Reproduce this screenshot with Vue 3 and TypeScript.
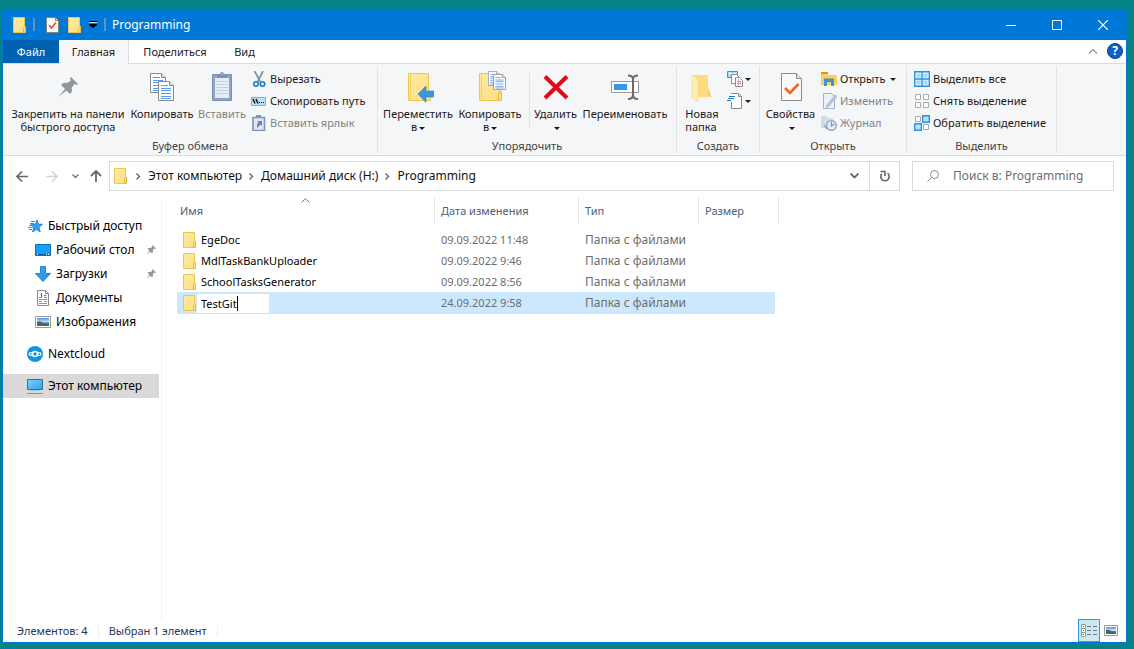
<script setup lang="ts">
import { ref } from 'vue'

interface FileRow {
  name: string
  date: string
  kind: string
}

const files: FileRow[] = [
  { name: 'EgeDoc', date: '09.09.2022 11:48', kind: 'Папка с файлами' },
  { name: 'MdlTaskBankUploader', date: '09.09.2022 9:46', kind: 'Папка с файлами' },
  { name: 'SchoolTasksGenerator', date: '09.09.2022 8:56', kind: 'Папка с файлами' },
  { name: 'TestGit', date: '24.09.2022 9:58', kind: 'Папка с файлами' },
]

const renaming = ref('TestGit')
const query = ref('')
const crumbs = ['Этот компьютер', 'Домашний диск (H:)', 'Programming']

const places = [
  { label: 'Быстрый доступ', icon: 'i-star', child: false, pinned: false, gap: false, active: false },
  { label: 'Рабочий стол', icon: 'i-desktop', child: true, pinned: true, gap: false, active: false },
  { label: 'Загрузки', icon: 'i-download', child: true, pinned: true, gap: false, active: false },
  { label: 'Документы', icon: 'i-docs', child: true, pinned: false, gap: false, active: false },
  { label: 'Изображения', icon: 'i-pictures', child: true, pinned: false, gap: false, active: false },
  { label: 'Nextcloud', icon: 'i-nextcloud', child: false, pinned: false, gap: true, active: false },
  { label: 'Этот компьютер', icon: 'i-pc', child: false, pinned: false, gap: true, active: true },
]
</script>

<template>
  <div class="desktop">
    <svg class="defs" aria-hidden="true">
      <defs>
        <linearGradient id="g-folder" x1="0" y1="0" x2="1" y2="1">
          <stop offset="0" stop-color="#ffe9a2" />
          <stop offset="1" stop-color="#fddf83" />
        </linearGradient>
        <linearGradient id="g-blue" x1="0" y1="0" x2="1" y2="1">
          <stop offset="0" stop-color="#3fa9f5" />
          <stop offset="1" stop-color="#1a8de0" />
        </linearGradient>
        <linearGradient id="g-sky" x1="0" y1="0" x2="0" y2="1">
          <stop offset="0" stop-color="#4a8ff0" />
          <stop offset=".5" stop-color="#cfe4f7" />
          <stop offset=".6" stop-color="#4d7f86" />
          <stop offset="1" stop-color="#2d5f8a" />
        </linearGradient>
        <linearGradient id="g-screen" x1="0" y1="0" x2="1" y2="1">
          <stop offset="0" stop-color="#7cd0fb" />
          <stop offset="1" stop-color="#2ba4f3" />
        </linearGradient>
      </defs>
      <symbol id="i-folder" viewBox="0 0 13 16">
        <path d="M.5.5h11v9h1v6H.5z" fill="url(#g-folder)" stroke="#ecc84f" />
        <path d="M10.5 15.5v-5l1-1h1v6z" fill="#ffe08a" stroke="#e6bd3c" />
      </symbol>
      <symbol id="i-pin" viewBox="0 0 20 20">
        <path d="M0 20 7 12 3 8Q5 5 9 6L13 3.500 12 1 13 0 20 7 19 8 16.500 7 13.500 11Q15 14 12 17L8.500 13.500Z" fill="#8d989e" />
      </symbol>
      <symbol id="i-sheet" viewBox="0 0 16 20">
        <path d="M.5.5h11l4 4v15H.5z" fill="#fbfcfd" stroke="#8b8b8b" />
        <path d="M11.500.5v4h4" fill="#e6e6e6" stroke="#8b8b8b" />
        <path d="M3 4.500h7M3 7.500h10M3 9.500h10M3 12.500h10M3 15.500h10M3 17.500h10" stroke="#5a9bf0" />
      </symbol>
      <symbol id="i-star" viewBox="0 0 16 16">
        <path d="m10 2 1.300 4 4.200.3-3.500 3 1.300 4.700-3.800-2.500L5.500 14l1.300-4.700-2.800-3 4.500-.3z" fill="#2aa0f0" stroke="#1382cf" stroke-width=".8" />
        <path d="M4 3.500h4M3 5.500h4M2 7.500h4M1 9.500h5M2 11.500h3" stroke="#2a90d8" />
      </symbol>
      <symbol id="i-desktop" viewBox="0 0 16 16">
        <path d="M.5 2.500h15v11H.5z" fill="#15a0fb" stroke="#0b74b8" />
        <path d="M1 12.500h14" stroke="#0a5a94" />
        <path d="M2 12.500h1M11 12.500h1M13 12.500h1" stroke="#fff" />
      </symbol>
      <symbol id="i-download" viewBox="0 0 16 16">
        <path d="M5.500.5h5v7h5L8 15.500.5 7.500h5z" fill="url(#g-blue)" stroke="#2f80c4" />
      </symbol>
      <symbol id="i-docs" viewBox="0 0 16 16">
        <path d="M2.500.5h8l3 3v12h-11z" fill="#fff" stroke="#8b8b8b" />
        <path d="M10.500.5v3h3" fill="none" stroke="#8b8b8b" />
        <path d="M4 7.500h3M9 7.500h3M4 9.500h8M9 11.500h3M4 13.500h8M4 11.500h3" stroke="#8b9aa8" />
        <path d="M6.500 3v4M5.500 5h2M9 5.500h2" stroke="#2284cf" />
      </symbol>
      <symbol id="i-pictures" viewBox="0 0 16 16">
        <path d="M.5 2.500h15v11H.5z" fill="#fff" stroke="#999" />
        <path d="M2 4h12v8H2z" fill="url(#g-sky)" />
        <path d="M2 8q4-2 7 2l5 0v2H2z" fill="#3e6d60" />
      </symbol>
      <symbol id="i-nextcloud" viewBox="0 0 16 16">
        <circle cx="8" cy="8" r="8" fill="#1095db" />
        <g fill="none" stroke="#fff">
          <circle cx="8" cy="8" r="2.500" stroke-width="1.500" />
          <circle cx="3.700" cy="8" r="1.500" stroke-width="1.200" />
          <circle cx="12.300" cy="8" r="1.500" stroke-width="1.200" />
        </g>
      </symbol>
      <symbol id="i-pc" viewBox="0 0 16 16">
        <path d="M.5 1.500h15v10H.5z" fill="url(#g-screen)" stroke="#356f96" />
        <path d="M4 12.500h8" stroke="#9fc4dc" />
        <path d="M0 15.500h16" stroke="#6f97b0" />
      </symbol>
    </svg>

    <div class="window">
      <header class="titlebar">
        <svg class="folder" aria-hidden="true"><use href="#i-folder" /></svg>
        <i class="tsep"></i>
        <button class="plain q1" aria-label="Свойства">
          <svg width="13" height="16" viewBox="0 0 13 16">
            <path d="M.5.5h9l3 3v12H.5z" fill="#f8f8f8" stroke="#8a7f78" />
            <path d="M9.500.5v3h3" fill="none" stroke="#8a7f78" />
            <path d="m3 8 2.500 3L10 5.500" fill="none" stroke="#e8501c" stroke-width="1.600" />
          </svg>
        </button>
        <button class="plain q2" aria-label="Новая папка"><svg class="folder"><use href="#i-folder" /></svg></button>
        <button class="plain q3" aria-label="Настройка панели">
          <svg width="8" height="7" viewBox="0 0 8 7">
            <path d="M0 .5h8" stroke="#000" /><path d="M0 1.500h8" stroke="#cde" /><path d="M0 3h8v1L4 7 0 4z" fill="#000" />
          </svg>
        </button>
        <i class="tsep"></i>
        <h1 class="title">Programming</h1>
        <div class="winbtns">
          <button class="plain" aria-label="Свернуть">
            <svg width="10" height="10"><path d="M0 5.500h10" stroke="#fff" /></svg>
          </button>
          <button class="plain" aria-label="Развернуть">
            <svg width="10" height="10"><path d="M.5.5h9v9h-9z" fill="none" stroke="#fff" /></svg>
          </button>
          <button class="plain" aria-label="Закрыть">
            <svg width="10" height="10"><path d="m0 0 10 10M10 0 0 10" stroke="#fff" stroke-width="1.200" /></svg>
          </button>
        </div>
      </header>

      <nav class="tabs">
        <button class="plain tab file">Файл</button>
        <button class="plain tab home">Главная</button>
        <button class="plain tab share">Поделиться</button>
        <button class="plain tab view">Вид</button>
        <div class="tabtools">
          <button class="plain" aria-label="Свернуть ленту">
            <svg width="8" height="5"><path d="m0 4.500 4-4 4 4" fill="none" stroke="#999" stroke-width="1.300" /></svg>
          </button>
          <button class="plain help" aria-label="Справка">?</button>
        </div>
      </nav>

      <div class="ribbon">
        <section class="group g1">
          <div class="tools">
            <button class="plain big w-pin">
              <svg viewBox="0 0 32 32"><use href="#i-pin" x="6" y="6" width="20" height="20" /></svg>
              <span>Закрепить на панели<br />быстрого доступа</span>
            </button>
            <button class="plain big w-copy">
              <svg viewBox="0 0 32 32">
                <use href="#i-sheet" x="4" y="2" width="16" height="20" />
                <use href="#i-sheet" x="12" y="10" width="16" height="20" />
              </svg>
              <span>Копировать</span>
            </button>
            <button class="plain big w-paste off" disabled>
              <svg viewBox="0 0 32 32">
                <path d="M6.500 3.500h19v26h-19z" fill="#91a4c6" stroke="#7d90b3" />
                <path d="M9 7h14v20H9z" fill="#e7edf7" />
                <path d="M10 10.500h12M10 13.500h12M10 16.500h12M10 19.500h12M10 22.500h12" stroke="#c3cfe4" />
                <path d="M11 7V4h3q0-3 2-3t2 3h3v3z" fill="#8193b5" />
                <path d="M15.500 3h1" stroke="#fff" />
              </svg>
              <span>Вставить</span>
            </button>
            <div class="stack">
              <button class="plain small">
                <svg viewBox="0 0 16 16">
                  <path d="M3.500 0 9.500 11M12 0 6.500 11" stroke="#8795a1" stroke-width="1.800" />
                  <circle cx="5" cy="13" r="2.200" fill="none" stroke="#0d7fc4" stroke-width="1.600" />
                  <circle cx="11.500" cy="13" r="2.200" fill="none" stroke="#0d7fc4" stroke-width="1.600" />
                </svg>
                <span>Вырезать</span>
              </button>
              <button class="plain small">
                <svg viewBox="0 0 16 16">
                  <path d="M.5 4.500h14v8H.5z" fill="#b9e0f8" stroke="#7fb4d6" />
                  <path d="m2 6 2 4.500M5 6l2 4.500" stroke="#111" stroke-width="1.500" />
                  <path d="M8 9.500h1M10 9.500h1M12 9.500h1" stroke="#111" />
                </svg>
                <span>Скопировать путь</span>
              </button>
              <button class="plain small off" disabled>
                <svg viewBox="0 0 16 16">
                  <path d="M2 2.500h11.500v13H2z" fill="#dfe7f3" stroke="#7f93b6" stroke-width="1.600" />
                  <path d="M5 0h5v3H5z" fill="#7f93b6" />
                  <path d="M6 6h5v5L9.500 9.500 6 13V9l1.500-1.500z" fill="#6c84ad" />
                </svg>
                <span>Вставить ярлык</span>
              </button>
            </div>
          </div>
          <h2>Буфер обмена</h2>
        </section>

        <section class="group g2">
          <div class="tools">
            <button class="plain big w-move">
              <svg viewBox="0 0 32 32">
                <path d="M6.500 2.500h20v18h2v9h-22z" fill="url(#g-folder)" stroke="#ecc84f" />
                <path d="M8.500 3v26" stroke="#f2d36b" />
                <path d="m16 23 8-8v5h8v6h-8v5.500z" fill="#3a97e0" stroke="#2b80c4" stroke-width=".6" />
              </svg>
              <span>Переместить<br />в<i class="arr"></i></span>
            </button>
            <button class="plain big w-copy2">
              <svg viewBox="0 0 32 32">
                <path d="M5.500 2.500h20v18h2v9h-22z" fill="url(#g-folder)" stroke="#ecc84f" />
                <path d="M7.500 3v26" stroke="#f2d36b" />
                <path d="M24.500 29v-6l1.500-2h1.500v8z" fill="#ffe08a" stroke="#e6bd3c" />
                <use href="#i-sheet" x="14" y="0" width="12" height="15" />
                <use href="#i-sheet" x="19" y="3" width="13" height="16" />
              </svg>
              <span>Копировать<br />в<i class="arr"></i></span>
            </button>
            <i class="isep"></i>
            <button class="plain big w-del">
              <svg viewBox="0 0 32 32">
                <path d="M5 5.500 27 27M27 5.500 5 27" stroke="#e20a17" stroke-width="4" />
              </svg>
              <span>Удалить<br /><i class="arr"></i></span>
            </button>
            <button class="plain big w-ren">
              <svg viewBox="0 0 32 32">
                <path d="M2.500 10.500h27v11h-27z" fill="#fff" stroke="#999" />
                <path d="M5 13h13v6H5z" fill="#3398ea" />
                <path d="M19 4.500q5 0 5 3.500v16q0 4-5 4M29 4.500q-5 0-5 3.500v16q0 4 5 4" fill="none" stroke="#6b6b6b" stroke-width="2" />
              </svg>
              <span>Переименовать</span>
            </button>
          </div>
          <h2>Упорядочить</h2>
        </section>

        <section class="group g3">
          <div class="tools">
            <button class="plain big w-new">
              <svg viewBox="0 0 32 32">
                <path d="M8 4h14v13l3 9H8z" fill="#fbdc80" />
                <path d="m6 4 6 4v23l-6-4z" fill="#fdeeb9" stroke="#f5d97c" stroke-width=".6" />
                <path d="M22 17v6l3 3z" fill="#eec55a" />
              </svg>
              <span>Новая<br />папка</span>
            </button>
            <div class="stack">
              <button class="plain small" aria-label="Создать элемент">
                <svg viewBox="0 0 16 16">
                  <path d="M.5.5h10v6H.5z" fill="#a8dcf5" stroke="#4b90b5" /><path d="M2 2.500h3M7 2.500h2" stroke="#fff" />
                  <path d="M4.500 3.500h5l3 3v6h-8z" fill="#fff" stroke="#8b8b8b" />
                  <path d="M8.500 6.500h4l3 3v6h-7z" fill="#fff" stroke="#8b8b8b" />
                  <path d="M10 10.500h4M10 12.500h4" stroke="#5a9bf0" /><path d="M11.500 8v7" stroke="#f19a9a" />
                </svg><i class="arr"></i>
              </button>
              <button class="plain small" aria-label="Простой доступ">
                <svg viewBox="0 0 16 16">
                  <path d="M4 .5h7.500l3 3v12h-10V9" fill="#fdfdfd" stroke="#8b8b8b" /><path d="M11.500.5v3h3" fill="none" stroke="#8b8b8b" />
                  <path d="M2 3.500h6M1 5.500h6M0 7.500h4" stroke="#2471b8" />
                </svg><i class="arr"></i>
              </button>
            </div>
          </div>
          <h2>Создать</h2>
        </section>

        <section class="group g4">
          <div class="tools">
            <button class="plain big w-prop">
              <svg viewBox="0 0 32 32">
                <path d="M6.500 2.500h15l5 5v22h-20z" fill="#f7f9fb" stroke="#8b8b8b" />
                <path d="M21.500 2.500v5h5" fill="#e4e4e4" stroke="#8b8b8b" />
                <path d="m10 17 5 5 8.500-9" fill="none" stroke="#f2661f" stroke-width="2.600" />
              </svg>
              <span>Свойства<br /><i class="arr"></i></span>
            </button>
            <div class="stack">
              <button class="plain small">
                <svg viewBox="0 0 16 16">
                  <path d="M0 1h7v3h9v10H0z" fill="#fdcf55" /><path d="M0 1h7v2H0z" fill="#d99a12" />
                  <path d="M3 15V7.500h10V15h-3v-4H6v4z" fill="#3b93da" />
                </svg>
                <span>Открыть</span><i class="arr"></i>
              </button>
              <button class="plain small off" disabled>
                <svg viewBox="0 0 16 16">
                  <path d="M2.500.5h8l3 3v12h-11z" fill="#edf2fa" stroke="#a3b3cf" />
                  <path d="m6 12 8-10 2 1.500L8 13l-3 1.500z" fill="#b6c5de" stroke="#98abc9" stroke-width=".6" />
                </svg>
                <span>Изменить</span>
              </button>
              <button class="plain small off" disabled>
                <svg viewBox="0 0 16 16">
                  <path d="M0 1h6v2h6v10H0z" fill="#d2dbea" />
                  <circle cx="10.500" cy="10.500" r="4.800" fill="#e6edf7" stroke="#93a7c8" stroke-width="1.400" />
                  <path d="M10.500 7v4l3-2M6 14l-3-4" fill="none" stroke="#7d94ba" stroke-width="1.200" />
                </svg>
                <span>Журнал</span>
              </button>
            </div>
          </div>
          <h2>Открыть</h2>
        </section>

        <section class="group g5">
          <div class="tools">
            <div class="stack">
              <button class="plain small">
                <svg viewBox="0 0 16 16">
                  <path d="M.7.7h14.600v14.600H.7z" fill="#e8f5fe" />
                  <path d="M2.500 2.500h4v4h-4zM9.500 2.500h4v4h-4zM2.500 9.500h4v4h-4zM9.500 9.500h4v4h-4z" fill="#a6dafa" />
                  <path d="M.7.7h14.600v14.600H.7zM8 0v16M0 8h16" fill="none" stroke="#2e94e0" stroke-width="1.400" />
                </svg>
                <span>Выделить все</span>
              </button>
              <button class="plain small">
                <svg viewBox="0 0 16 16">
                  <path d="M1.500 1.500h5v5h-5zM9.500 1.500h5v5h-5zM1.500 9.500h5v5h-5zM9.500 9.500h5v5h-5z" fill="#fff" stroke="#aaa" />
                </svg>
                <span>Снять выделение</span>
              </button>
              <button class="plain small">
                <svg viewBox="0 0 16 16">
                  <path d="M1.500 1.500h5v5h-5zM9.500 9.500h5v5h-5z" fill="#fff" stroke="#aaa" />
                  <path d="M8.700.7h6.600v6.600H8.700zM.7 8.700h6.600v6.600H.7z" fill="#b3e0fb" stroke="#2e94e0" stroke-width="1.400" />
                </svg>
                <span>Обратить выделение</span>
              </button>
            </div>
          </div>
          <h2>Выделить</h2>
        </section>
      </div>

      <div class="navrow">
        <button class="plain n-back" aria-label="Назад">
          <svg width="12" height="11"><path d="M12 5.500H1M6 .5l-5 5 5 5" fill="none" stroke="#666" stroke-width="1.600" /></svg>
        </button>
        <button class="plain n-fwd" aria-label="Вперёд">
          <svg width="12" height="11"><path d="M0 5.500h11M6 .5l5 5-5 5" fill="none" stroke="#d4d4d4" stroke-width="1.600" /></svg>
        </button>
        <button class="plain n-recent" aria-label="Последние расположения">
          <svg width="7" height="5"><path d="m.5.5 3 3 3-3" fill="none" stroke="#777" stroke-width="1.500" /></svg>
        </button>
        <button class="plain n-up" aria-label="Вверх">
          <svg width="12" height="12"><path d="M6 12V1M1 6l5-5 5 5" fill="none" stroke="#666" stroke-width="1.800" /></svg>
        </button>
        <div class="address">
          <svg class="folder" aria-hidden="true"><use href="#i-folder" /></svg>
          <template v-for="c in crumbs" :key="c">
            <svg class="chev" width="5" height="7"><path d="m.5.5 3 3-3 3" fill="none" stroke="#666" stroke-width="1.400" /></svg>
            <button class="plain crumb">{{ c }}</button>
          </template>
          <button class="plain drop" aria-label="Предыдущие расположения">
            <svg width="9" height="6"><path d="m.5.5 4 4 4-4" fill="none" stroke="#666" stroke-width="1.800" /></svg>
          </button>
          <button class="plain refresh" aria-label="Обновить">
            <svg width="12" height="12"><path d="M2.800 3.800A4.200 4.200 0 1 0 8.500 3.200M1.500 1.500H6V6" fill="none" stroke="#666" stroke-width="1.600" /></svg>
          </button>
        </div>
        <label class="search">
          <svg width="12" height="12"><circle cx="7.500" cy="4.500" r="4" fill="none" stroke="#888" /><path d="M4.700 7.300.5 11.500" stroke="#888" /></svg>
          <input v-model="query" type="text" placeholder="Поиск в: Programming" aria-label="Поиск в: Programming" />
        </label>
      </div>

      <main class="content">
        <aside class="side">
          <button
            v-for="p in places"
            :key="p.label"
            class="plain place"
            :class="{ child: p.child, gap: p.gap, active: p.active }"
          >
            <svg class="picon"><use :href="'#' + p.icon" /></svg>
            <span>{{ p.label }}</span>
            <svg v-if="p.pinned" class="pin"><use href="#i-pin" /></svg>
          </button>
        </aside>
        <div class="list">
          <table>
            <colgroup><col class="c1" /><col class="c2" /><col class="c3" /><col class="c4" /></colgroup>
            <thead>
              <tr>
                <th>
                  <button class="plain head first">Имя
                    <svg class="sort" width="9" height="5"><path d="m.5 4.500 4-4 4 4" fill="none" stroke="#777" /></svg>
                  </button>
                </th>
                <th><button class="plain head">Дата изменения</button></th>
                <th><button class="plain head">Тип</button></th>
                <th><button class="plain head">Размер</button></th>
              </tr>
            </thead>
            <tbody>
              <tr v-for="(f, i) in files" :key="f.name" :class="{ selected: i === 3 }">
                <td class="name">
                  <div>
                    <svg class="folder"><use href="#i-folder" /></svg>
                    <span v-if="i !== 3">{{ f.name }}</span>
                    <span v-else class="edit"><input v-model="renaming" type="text" aria-label="Имя папки" /><i class="caret"></i></span>
                  </div>
                </td>
                <td>{{ f.date }}</td>
                <td class="kind">{{ f.kind }}</td>
                <td></td>
              </tr>
            </tbody>
          </table>
        </div>
      </main>

      <footer class="status">
        <span>Элементов: 4</span>
        <span>Выбран 1 элемент</span>
        <div class="views">
          <button class="plain on" aria-label="Таблица">
            <svg width="16" height="14" viewBox="0 0 16 14">
              <path d="M.5.5h4v4h-4zM.5 4.500h4v4h-4zM.5 8.500h4v4h-4z" fill="#fff" stroke="#999" />
              <path d="M2 2.500h1" stroke="#2b9a3c" /><path d="M2 6.500h1" stroke="#2b6ff0" /><path d="M2 10.500h1" stroke="#e02020" />
              <path d="M6 2.500h4M12 2.500h4M6 6.500h4M12 6.500h4M6 10.500h4M12 10.500h4" stroke="#777" />
            </svg>
          </button>
          <button class="plain" aria-label="Крупные эскизы">
            <svg width="14" height="12" viewBox="0 0 14 12">
              <path d="M.5.5h13v10H.5z" fill="#fff" stroke="#999" />
              <path d="M2 2h10v7H2z" fill="url(#g-sky)" /><path d="M2 5q4-1 6 2h4v2H2z" fill="#3e6d60" />
            </svg>
          </button>
        </div>
      </footer>
    </div>
  </div>
</template>

<style>
html,
body {
  margin: 0;
  background: #038387;
}
</style>

<style scoped>
.desktop {
  box-sizing: border-box;
  min-height: 100vh;
  padding: 9px 7px 6px 2px;
  display: flex;
  background: #038387;
  font-family: "Noto Sans", "Open Sans", sans-serif;
  font-size: 12px;
  line-height: 16px;
  color: #1b1b1b;
}
.desktop * {
  box-sizing: border-box;
}
.defs {
  position: absolute;
  width: 0;
  height: 0;
}
svg {
  display: block;
  flex: none;
}
.plain {
  font: inherit;
  color: inherit;
  background: none;
  border: 0;
  padding: 0;
  margin: 0;
  white-space: nowrap;
}
.window {
  flex: 1;
  min-width: 0;
  display: flex;
  flex-direction: column;
  background: #fff;
  border: 1px solid #0078d7;
  border-top: 0;
}
.folder {
  width: 13px;
  height: 16px;
}

.titlebar {
  display: flex;
  align-items: center;
  height: 31px;
  padding-left: 10px;
  background: #0078d7;
  color: #fff;
}
.tsep {
  width: 2px;
  height: 13px;
  margin: 0 6px 0 7px;
  background: #5795cb;
}
.q1 {
  margin-left: 5px;
}
.q2 {
  margin: 0 8px 0 9px;
}
.title {
  margin: 0;
  font-size: 12px;
  font-weight: 400;
}
.winbtns {
  display: flex;
  margin-left: auto;
}
.winbtns button {
  width: 46px;
  height: 31px;
  display: grid;
  place-items: center;
}

.tabs {
  display: flex;
  height: 24px;
  font-size: 11px;
  box-shadow: inset 0 -1px #dadbdc;
}
.tab {
  height: 23px;
}
.file {
  width: 56px;
  background: #0063b1;
  color: #fff;
}
.home {
  width: 70px;
  height: 24px;
  background: #f5f6f7;
  border-right: 1px solid #dadbdc;
}
.share {
  width: 92px;
}
.view {
  width: 47px;
}
.tabtools {
  display: flex;
  align-items: center;
  gap: 10px;
  height: 22px;
  margin-left: auto;
  padding-right: 3px;
}
.help {
  width: 16px;
  height: 16px;
  border-radius: 50%;
  border: 1px solid #0a3f78;
  background: #0b62c4;
  color: #fff;
  font-size: 12px;
  font-weight: 700;
  line-height: 14px;
}

.ribbon {
  display: flex;
  height: 92px;
  padding-top: 2px;
  font-size: 11px;
  background: #f5f6f7;
  border-bottom: 1px solid #dadbdc;
}
.group {
  flex: none;
  height: 87px;
  display: flex;
  flex-direction: column;
  justify-content: space-between;
  border-right: 1px solid #e2e3e4;
}
.group h2 {
  margin: 0;
  font-size: 11px;
  font-weight: 400;
  line-height: 14px;
  text-align: center;
  color: #444;
}
.g1 { width: 375px; }
.g2 { width: 299px; }
.g3 { width: 83px; }
.g4 { width: 147px; }
.g5 { width: 150px; }
.tools {
  display: flex;
}
.big {
  display: flex;
  flex-direction: column;
  align-items: center;
  padding-top: 5px;
  line-height: 13px;
}
.big svg {
  width: 32px;
  height: 32px;
}
.big span {
  margin-top: 4px;
}
.w-pin { width: 120px; margin-left: 5px; }
.w-copy { width: 68px; }
.w-paste { width: 52px; }
.w-move { width: 70px; margin-left: 5px; }
.w-copy2 { width: 74px; }
.w-del { width: 51px; }
.w-ren { width: 88px; }
.w-new { width: 50px; text-align: left; }
.w-prop { width: 61px; }
.isep {
  width: 1px;
  height: 55px;
  margin-top: 7px;
  margin-left: 2px;
  background: #e2e3e4;
}
.stack {
  display: flex;
  flex-direction: column;
  padding-top: 2px;
}
.g1 .stack {
  padding-left: 3px;
}
.g5 .stack {
  padding-left: 7px;
}
.small {
  display: flex;
  align-items: center;
  gap: 3px;
  height: 22px;
}
.g3 .small {
  gap: 0;
}
.small svg {
  width: 16px;
  height: 16px;
}
.off {
  color: #838383;
}
.arr {
  display: inline-block;
  width: 0;
  height: 0;
  border: 3px solid transparent;
  border-top-color: #1b1b1b;
  border-bottom: 0;
  vertical-align: middle;
  margin-left: 2px;
}

.navrow {
  display: flex;
  align-items: flex-start;
  height: 42px;
  padding: 5px 12px 0 13px;
}
.navrow > .plain {
  height: 30px;
  display: grid;
  place-items: center;
}
.navrow > .n-back { width: 12px; }
.navrow > .n-fwd { width: 12px; margin-left: 18px; }
.navrow > .n-recent { width: 8px; margin-left: 13px; }
.navrow > .n-up { width: 12px; margin-left: 11px; }
.address {
  flex: 1;
  min-width: 0;
  height: 30px;
  margin-left: 7px;
  padding-left: 4px;
  display: flex;
  align-items: center;
  border: 1px solid #d9d9d9;
}
.address .folder {
  margin-right: 2px;
}
.chev {
  margin: 0 7px;
}
.crumb {
  color: #111;
}
.drop {
  width: 30px;
  height: 28px;
  margin-left: auto;
  display: grid;
  place-items: center;
}
.refresh {
  width: 30px;
  height: 28px;
  display: grid;
  place-items: center;
  border-left: 1px solid #d9d9d9;
}
.search {
  width: 202px;
  height: 30px;
  margin-left: 12px;
  padding-left: 14px;
  display: flex;
  align-items: center;
  gap: 14px;
  border: 1px solid #d9d9d9;
}
.search input {
  flex: 1;
  min-width: 0;
  padding: 0;
  border: 0;
  outline: 0;
  background: none;
  font: inherit;
}
.search input::placeholder {
  color: #6d6d6d;
  opacity: 1;
}

.content {
  flex: 1;
  display: flex;
}
.side {
  width: 159px;
  padding: 16px 2px 0 0;
  display: flex;
  flex-direction: column;
  border-right: 1px solid #f0f0f0;
}
.place {
  height: 24px;
  padding-left: 24px;
  display: flex;
  align-items: center;
  gap: 5px;
  color: #000;
}
.child {
  padding-left: 32px;
}
.gap {
  margin-top: 8px;
}
.active {
  background: #d9d9d9;
}
.picon {
  width: 16px;
  height: 16px;
}
.pin {
  width: 10px;
  height: 10px;
  margin-left: auto;
  margin-right: 3px;
}
.list {
  flex: 1;
  min-width: 0;
  padding-left: 15px;
}
table {
  width: 602px;
  table-layout: fixed;
  border-collapse: separate;
  border-spacing: 0;
  font-size: 11px;
}
.c1 { width: 258px; }
.c2 { width: 144px; }
.c3 { width: 120px; }
.c4 { width: 80px; }
th {
  padding: 0 0 5px;
  font-weight: 400;
}
.head {
  position: relative;
  display: block;
  width: 100%;
  height: 26px;
  padding-left: 6px;
  text-align: left;
  color: #4c607a;
  border-right: 1px solid #e5e5e5;
}
.first {
  padding-left: 3px;
}
.sort {
  position: absolute;
  top: 0;
  left: 50%;
  margin-left: -5px;
}
td {
  height: 21px;
  padding: 0 0 0 6px;
  color: #6d6d6d;
  white-space: nowrap;
}
td:last-child {
  border-right: 4px solid #fff;
}
.kind {
  font-size: 12px;
}
.name {
  color: #000;
}
.name div {
  display: flex;
  align-items: center;
  gap: 5px;
}
.selected td {
  height: 22px;
  background-color: #cce8ff;
}
.edit {
  position: relative;
  margin-left: -4px;
}
.edit input {
  display: block;
  width: 72px;
  height: 19px;
  padding: 0 4px;
  border: 0;
  outline: 0;
  background: #fff;
  font: inherit;
  color: #000;
}
.caret {
  position: absolute;
  left: 40px;
  top: 2px;
  width: 1px;
  height: 15px;
  background: #000;
}

.status {
  display: flex;
  align-items: center;
  height: 23px;
  padding-left: 4px;
  font-size: 11px;
  color: #1e395b;
}
.status span {
  padding: 0 10px;
  line-height: 12px;
  border-right: 1px solid #eee;
}
.views {
  display: flex;
  margin-left: auto;
  padding-right: 4px;
}
.views button {
  width: 22px;
  height: 23px;
  display: grid;
  place-items: center;
}
.views .on {
  background: #cce8f4;
  border: 1px solid #26a0da;
}
</style>
